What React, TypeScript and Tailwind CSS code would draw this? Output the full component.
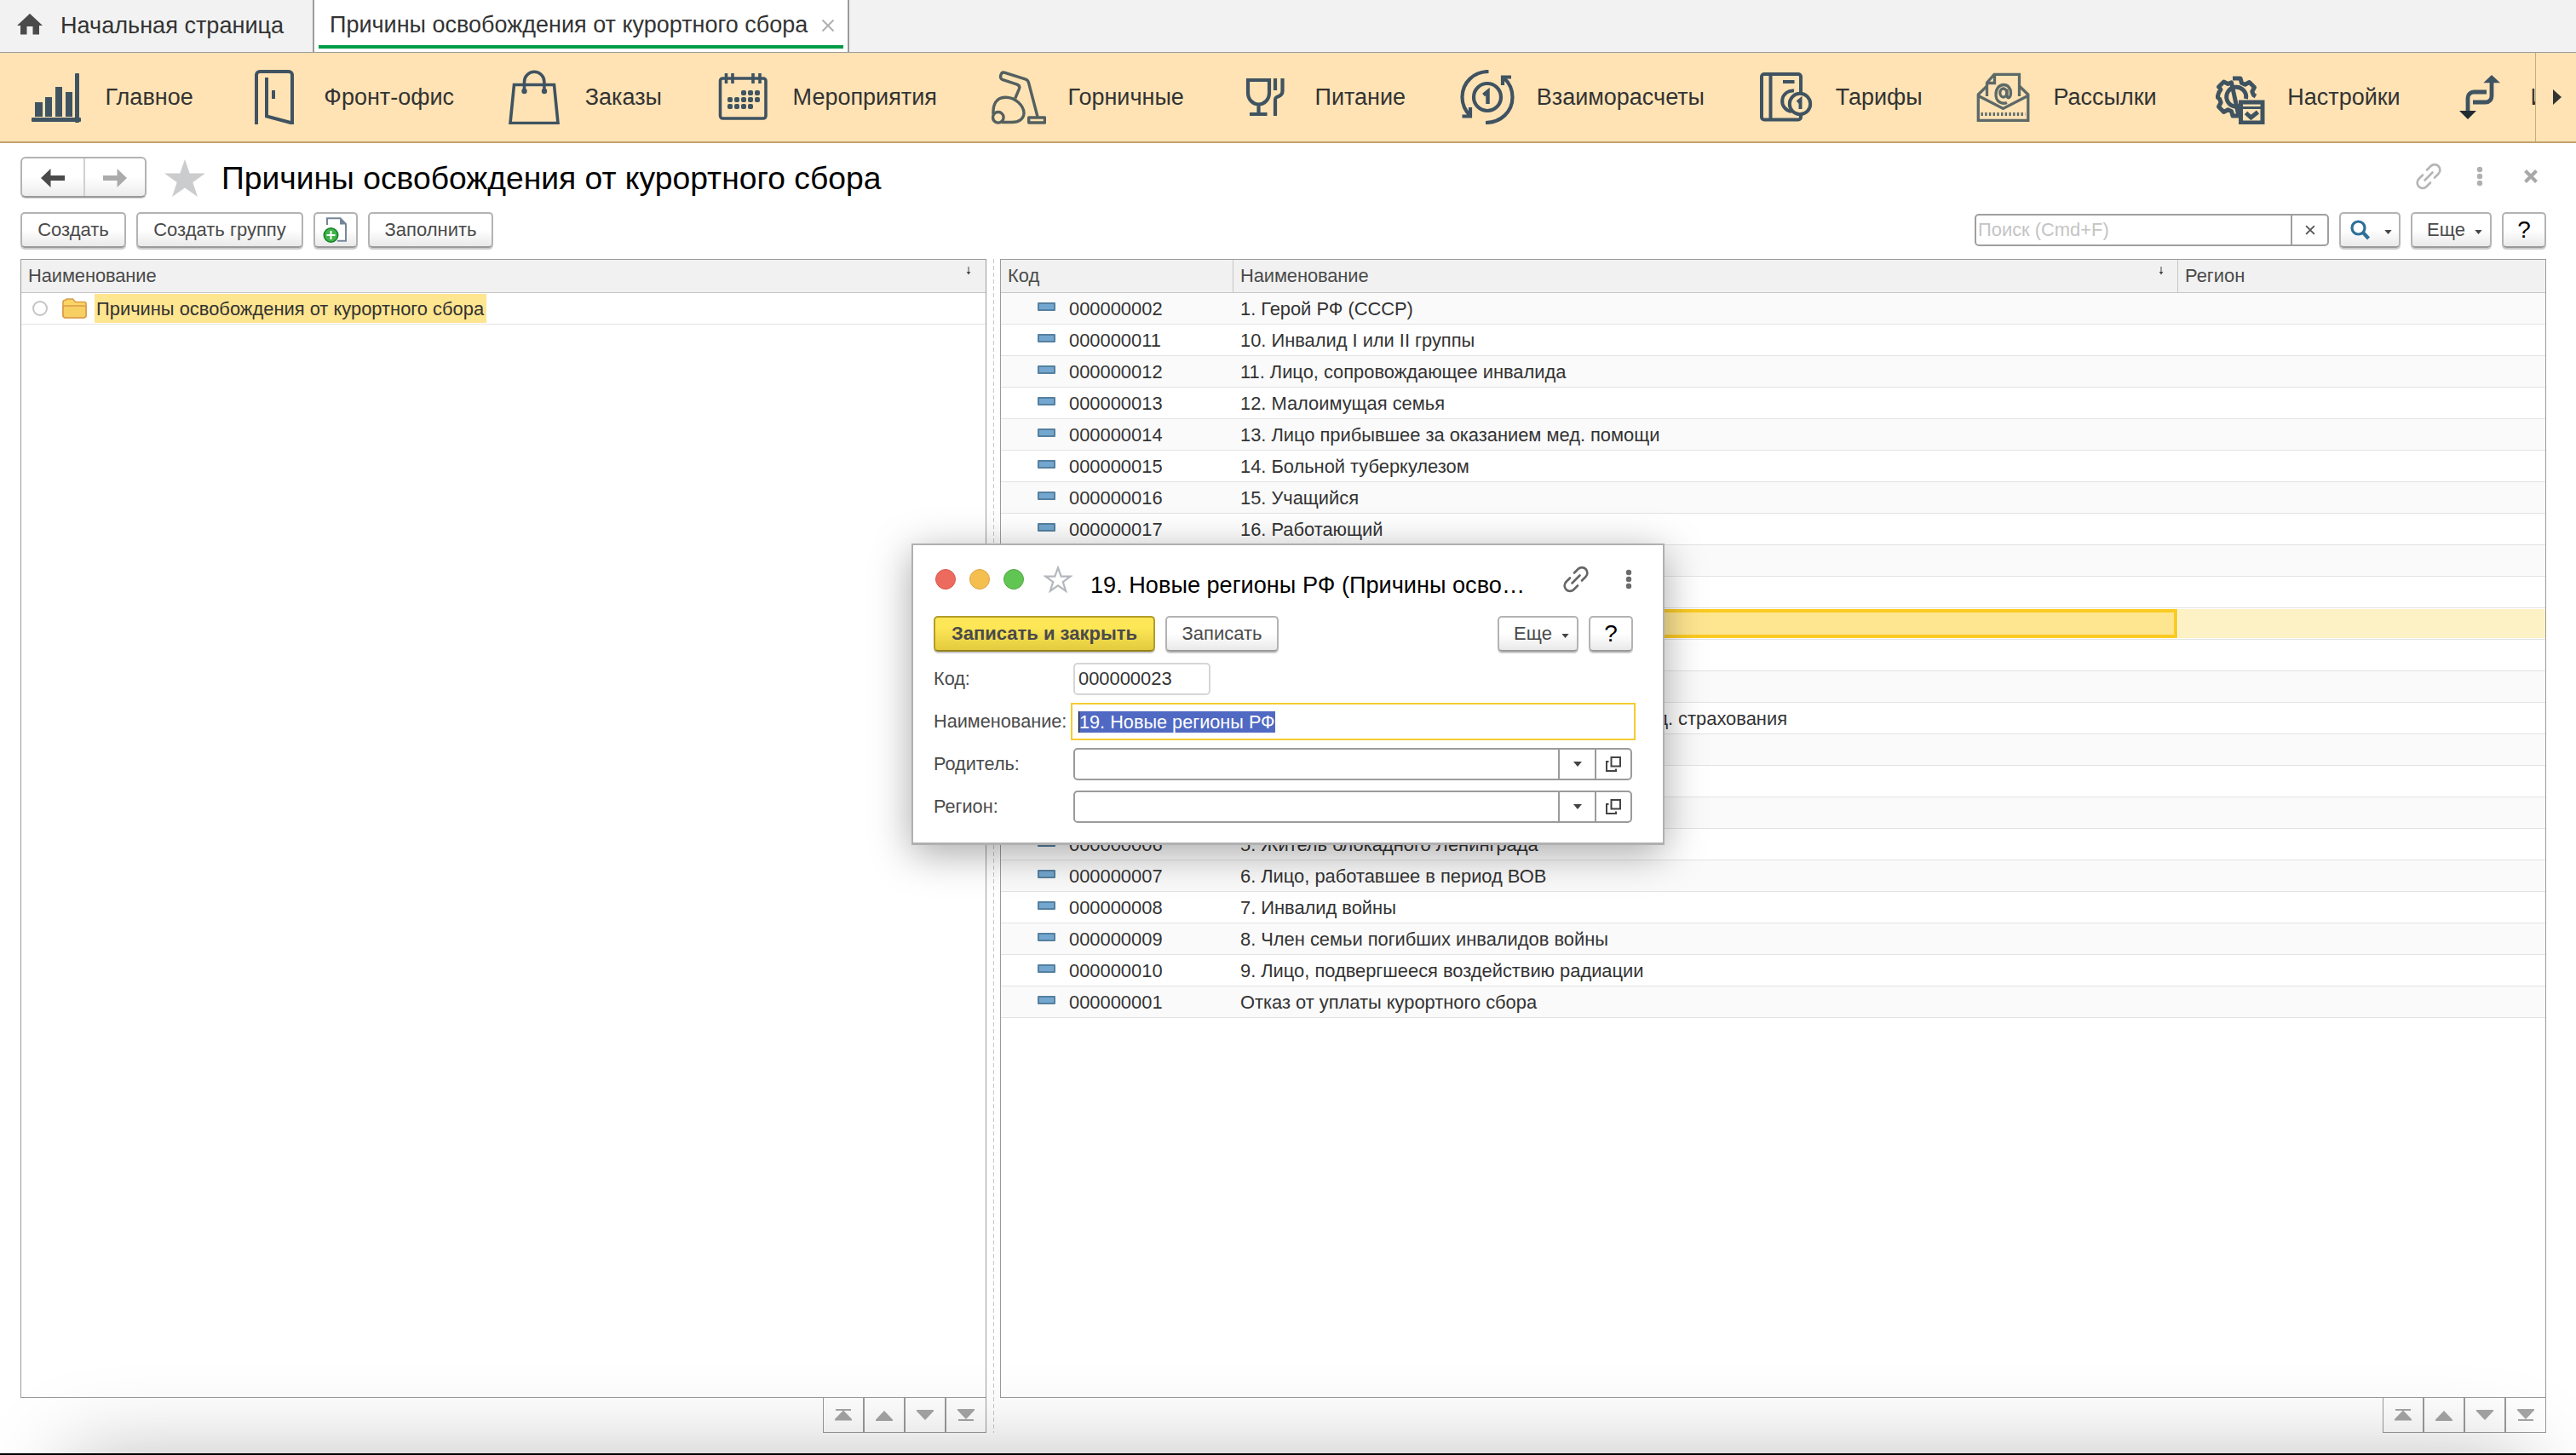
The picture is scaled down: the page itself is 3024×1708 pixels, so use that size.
import React from 'react';

type P = { children?: React.ReactNode; className?: string };

/* ---------- Section icons, drawn in a 64×64 box ---------- */

function Box({ children, w = 4 }: { children: React.ReactNode; w?: number }) {
  return (
    <svg viewBox="0 0 64 64" className="block h-16 w-16 shrink-0 overflow-hidden" fill="none" stroke="#3f5361" strokeWidth={w}>
      {children}
    </svg>
  );
}

const ChartIcon = () => (
  <Box>
    <g fill="#3f5361" stroke="none">
      <rect x="7" y="38" width="9" height="17" />
      <rect x="19" y="32" width="8" height="23" />
      <rect x="31" y="20" width="8" height="35" />
      <rect x="43" y="26" width="8" height="29" />
      <rect x="54" y="4" width="5" height="58" rx="1" />
      <rect x="3" y="56" width="58" height="5" rx="1" />
    </g>
  </Box>
);

const DoorIcon = () => (
  <Box>
    <path d="M11 64V6a4 4 0 0 1 4-4h34a4 4 0 0 1 4 4v56.500L23 54.500V9" />
    <path d="M31 24v10" />
  </Box>
);

const BagIcon = () => (
  <Box w={3.6}>
    <path d="M6.500 17.500h47l4.500 45H2z" />
    <path d="M18.500 25V14a11.700 11.700 0 0 1 23.400 0v11" />
    <g fill="#3f5361" stroke="none">
      <circle cx="18.500" cy="25" r="3.200" />
      <circle cx="42" cy="25" r="3.200" />
    </g>
  </Box>
);

const DOTS: [number, number][] = [
  [32, 27], [40, 27], [48, 27],
  [16, 35], [24, 35], [32, 35], [40, 35], [48, 35],
  [16, 43], [24, 43], [32, 43], [40, 43],
];

const CalendarIcon = () => (
  <Box w={3.6}>
    <rect x="4.500" y="10" width="53.500" height="47" rx="3" />
    <path d="M11.500 4v12M19 4v12M43 4v12M51 4v12" />
    <g fill="#3f5361" stroke="none">
      {DOTS.map(([x, y]) => (
        <rect key={`${x}-${y}`} x={x - 3} y={y - 3} width="6" height="6" rx="2" />
      ))}
    </g>
  </Box>
);

const VacuumIcon = () => (
  <Box w={3.4}>
    <g stroke="#54605f" strokeLinejoin="round">
      <path d="M54 55 43.500 15c-.6-2.400-1.500-3.300-4-4.100L15 3.100c-4-1-6.200 6-2.500 8.300L30 17.200c2.600 1 3.300 2.800 2.500 5L27.700 33.500" />
      <path d="M2 52C1.500 41 5 32.500 16 32.200c12-.2 21.500 9.800 22 18.300.2 7-6 11-14 11H12" />
      <circle cx="7.800" cy="55.800" r="6.300" />
      <rect x="43.700" y="56" width="18.800" height="6" />
    </g>
  </Box>
);

const FoodIcon = () => (
  <Box w={4.2}>
    <path d="M11 12h25v15c0 8-6 13.500-12.500 13.500S11 35 11 27zM23.500 40v12M13 52h20.500" />
    <path d="M43 10v14M51.500 10v15c0 4-2.500 5.500-5.500 6.500-2.500.8-3 1.500-3 4V54" />
  </Box>
);

const MoneyIcon = () => (
  <Box w={4.2}>
    <path d="M33.500 2C16 2 2.500 15 2.500 32c0 9 4 16.500 9.500 22M30 62c18 0 31.500-13 31.500-30 0-9-4-17-10-22.500" />
    <path d="M2.500 54.500H12V44M60 8.500H50V18" />
    <circle cx="32" cy="32" r="16" />
    <path d="M27.500 29.500 32.500 25.500V40" strokeWidth="4.500" />
  </Box>
);

const TariffIcon = () => (
  <Box w={4}>
    <path d="M49 27V8a3 3 0 0 0-3-3H6a3 3 0 0 0-3 3v47.500a3 3 0 0 0 3 3h40a3 3 0 0 0 3-3V53" />
    <path d="M13.500 5v53M28 14h13.500" />
    <path d="M41 24.500a12.300 12.300 0 1 0-3 24.500" />
    <circle cx="48" cy="40" r="12.200" />
    <path d="M45 38l3.500-3v11" strokeWidth="4" />
  </Box>
);

const MailIcon = () => (
  <Box w={3.3}>
    <g stroke="#5c6968">
      <path d="M12.500 31V15L21 5.300h29.500V31M21.500 5v10.500H12" />
      <path d="M12 19.500 2.300 29v30.300h58.500V29L51 19.500" />
      <path d="m2.500 30.500 29 15 29-15" />
      <path d="M5.500 52h52" strokeWidth="4" strokeDasharray="2.400 2.300" />
      <path d="M36 38.500c-5 2-13 0-13-9.500 0-7 4-11.500 9-11.500s8.500 4 8.500 9.500c0 6-4 7.500-4.500 3.500v-8" />
      <ellipse cx="31.800" cy="27" rx="4" ry="5" />
    </g>
  </Box>
);

const GearIcon = () => (
  <Box w={5}>
    <path
      d="M26 10h9l1.500 5.500 4 1.700 5-2.700 6 6-2.700 5 1.700 4 2.500 1.500M33 54h-7l-1.500-5.500-4-1.700-5 2.700-6-6.200 2.700-5-1.700-4.300L8.500 32.500v-2l1.500-4.500 2-3-2.500-3 6-6 5 2.500 4-1.700z"
      strokeLinejoin="round"
    />
    <path d="M37 41a11.500 11.500 0 1 1 4.500-7" />
    <rect x="35.500" y="38" width="25.500" height="24" fill="#ffe3b5" />
    <path d="M35 44.500h26" strokeWidth="3" />
    <path d="m41.500 50.500 6 5.500 8-6.500" strokeWidth="5" />
  </Box>
);

const SwapIcon = () => (
  <Box w={4.8}>
    <path d="M44 14v17a7 7 0 0 1-7 7H22M38 26H23a7 7 0 0 0-7 7v16" />
    <g stroke="none">
      <path d="M34.300 15.300 44 6l10 9.300z" fill="#3f5361" />
      <path d="M6 48h20L16 58z" fill="#1f2b33" />
    </g>
  </Box>
);

/* ---------- Small icons ---------- */

const LinkIcon = ({ className }: P) => (
  <svg viewBox="0 0 32 32" className={className} fill="none" stroke="currentColor" strokeWidth="2.600" strokeLinecap="round">
    <path d="m11.500 20.500 9-9" />
    <path d="m14 8.500 4.500-4.500a6.300 6.300 0 0 1 9 0 6.300 6.300 0 0 1 0 9L23 17.500" />
    <path d="M18 23.500 13.500 28a6.300 6.300 0 0 1-9 0 6.300 6.300 0 0 1 0-9L9 14.500" />
  </svg>
);

const Dots = ({ className }: P) => (
  <svg viewBox="0 0 8 24" className={className} fill="currentColor">
    <circle cx="4" cy="4" r="3.200" />
    <circle cx="4" cy="12" r="3.200" />
    <circle cx="4" cy="20" r="3.200" />
  </svg>
);

const Cross = ({ className, w }: P & { w: number }) => (
  <svg viewBox="0 0 16 16" className={className} stroke="currentColor" strokeWidth={w}>
    <path d="m1.500 1.500 13 13M14.500 1.500l-13 13" />
  </svg>
);

const Caret = ({ className }: P) => (
  <svg viewBox="0 0 10 6" className={className} fill="#444">
    <path d="M0 0h10L5 6z" />
  </svg>
);

const SortArrow = ({ className }: P) => (
  <svg viewBox="0 0 6 10" className={className} stroke="#444" fill="#444">
    <path d="M3 0v7" strokeWidth="1" />
    <path d="M.7 6h4.600L3 9.500z" stroke="none" />
  </svg>
);

/* ---------- Controls ---------- */

const PLAIN = 'border-[#b3b3b3] border-b-[#9a9a9a] from-white from-50% to-[#e9e9e9]';
const PRIMARY = 'border-[#b39d28] border-b-[#94811c] from-[#fde757] from-30% to-[#e3cb3d]';

function Btn({ children, className = '', tone = PLAIN }: P & { tone?: string }) {
  return (
    <div
      className={`flex h-[42px] shrink-0 items-center justify-center rounded-[5px] border-2 bg-linear-to-b text-[22px] leading-[36px] text-[#4a4a4a] shadow-[0_2px_0_#cccccc] ${tone} ${className}`}
    >
      {children}
    </div>
  );
}

const More = () => (
  <Btn className="w-[95px] gap-[11px] pl-2">
    <span>Еще</span>
    <Caret className="mt-1 h-[5px] w-[9px]" />
  </Btn>
);

const Help = () => (
  <Btn className="w-[52px]">
    <span className="text-[28px] leading-none text-black">?</span>
  </Btn>
);

function Pager() {
  const cell = 'flex h-[41px] items-center justify-center border-b border-[#9b9b9b]';
  return (
    <div className="flex w-48 self-end text-[#a6a6a6]">
      <div className={`${cell} w-[49px] border-r-2 border-l`}>
        <svg viewBox="0 0 20 14" className="h-[14px] w-5" fill="currentColor">
          <path d="M1 0h18v2H1zM10 1.500 20 12v1.500H0V12z" />
        </svg>
      </div>
      <div className={`${cell} w-12 border-r-2`}>
        <svg viewBox="0 0 20 12" className="mt-0.5 h-3 w-5" fill="currentColor">
          <path d="M10 0 20 10.500V12H0v-1.500z" />
        </svg>
      </div>
      <div className={`${cell} w-12 border-r-2`}>
        <svg viewBox="0 0 20 12" className="h-3 w-5" fill="currentColor">
          <path d="M10 12 20 1.500V0H0v1.500z" />
        </svg>
      </div>
      <div className={`${cell} w-[47px] border-r`}>
        <svg viewBox="0 0 20 14" className="h-[14px] w-5" fill="currentColor">
          <path d="M1 12h18v2H1zM10 12 20 1.500V0H0v1.500z" />
        </svg>
      </div>
    </div>
  );
}

/* ---------- Data ---------- */

const NAV: [string, () => React.ReactElement][] = [
  ['Главное', ChartIcon],
  ['Фронт-офис', DoorIcon],
  ['Заказы', BagIcon],
  ['Мероприятия', CalendarIcon],
  ['Горничные', VacuumIcon],
  ['Питание', FoodIcon],
  ['Взаиморасчеты', MoneyIcon],
  ['Тарифы', TariffIcon],
  ['Рассылки', MailIcon],
  ['Настройки', GearIcon],
  ['И', SwapIcon],
];

type Row = { code?: string; name?: string; tail?: boolean; selected?: boolean };

const ROWS: Row[] = [
  { code: '000000002', name: '1. Герой РФ (СССР)' },
  { code: '000000011', name: '10. Инвалид I или II группы' },
  { code: '000000012', name: '11. Лицо, сопровождающее инвалида' },
  { code: '000000013', name: '12. Малоимущая семья' },
  { code: '000000014', name: '13. Лицо прибывшее за оказанием мед. помощи' },
  { code: '000000015', name: '14. Больной туберкулезом' },
  { code: '000000016', name: '15. Учащийся' },
  { code: '000000017', name: '16. Работающий' },
  {},
  {},
  { selected: true },
  {},
  {},
  { name: 'мед. страхования', tail: true },
  {},
  {},
  {},
  { code: '000000006', name: '5. Житель блокадного Ленинграда' },
  { code: '000000007', name: '6. Лицо, работавшее в период ВОВ' },
  { code: '000000008', name: '7. Инвалид войны' },
  { code: '000000009', name: '8. Член семьи погибших инвалидов войны' },
  { code: '000000010', name: '9. Лицо, подвергшееся воздействию радиации' },
  { code: '000000001', name: 'Отказ от уплаты курортного сбора' },
];

function TableRow({ row, odd }: { row: Row; odd: boolean }) {
  return (
    <div className={`flex h-[37px] border-b border-[#e3e3e3] leading-[38px] ${odd || row.selected ? 'bg-white' : 'bg-[#fafafa]'}`}>
      <div className="flex w-[272px] shrink-0 pl-[43px]">
        {row.code && (
          <>
            <div className="mt-[11px] mr-4 h-[10px] w-[21px] rounded-[1px] border-2 border-[#5580a0] bg-[#74a7cf]" />
            <span>{row.code}</span>
          </>
        )}
      </div>
      {row.selected ? (
        <>
          <div className="mt-px h-[34px] w-[1109px] shrink-0 border-4 border-[#fbcb22] bg-[#fee590]" />
          <div className="mt-px ml-px h-[34px] grow bg-[#fdf2c6]" />
        </>
      ) : (
        <div className={row.tail ? 'w-[651px] text-right' : 'pl-[9px] tracking-[-0.02px]'}>{row.name}</div>
      )}
    </div>
  );
}

/* ---------- Dialog ---------- */

const Label = ({ children }: P) => <div className="w-[164px] shrink-0 text-[21.7px] text-[#4a4a4a]">{children}</div>;

function RefField({ label }: { label: string }) {
  return (
    <div className="flex h-[50px] items-center">
      <Label>{label}</Label>
      <div className="flex h-[38px] w-[656px] rounded-[5px] border-2 border-[#9b9b9b] bg-white">
        <div className="grow" />
        <div className="flex w-[43px] items-center justify-center border-l-2 border-[#9b9b9b]">
          <Caret className="h-1.5 w-[10px]" />
        </div>
        <div className="flex w-[42px] items-center justify-center border-l-2 border-[#9b9b9b]">
          <svg viewBox="0 0 20 20" className="h-5 w-5" fill="none" stroke="#444" strokeWidth="2">
            <path d="M7.500 2h10.500v10.500H7.500zM4.500 7H2v11h11v-2.500" />
          </svg>
        </div>
      </div>
    </div>
  );
}

function Dialog() {
  return (
    <div className="absolute top-[638px] left-[1070px] h-[354px] w-[884px] border-2 border-[#b0b0b0] border-b-[3px] bg-white px-6 text-[21.9px] leading-none shadow-[0_10px_44px_rgba(0,0,0,0.34)]">
      <div className="flex h-[83px] items-center pb-1 pl-0.5">
        <div className="flex gap-4">
          <div className="h-6 w-6 rounded-full border border-[#d9574c] bg-[#ed6a5f]" />
          <div className="h-6 w-6 rounded-full border border-[#dfa341] bg-[#f5bf4f]" />
          <div className="h-6 w-6 rounded-full border border-[#51a73e] bg-[#61c554]" />
        </div>
        <svg viewBox="0 0 34 32" className="ml-[23px] h-8 w-[34px]" fill="none" stroke="#b4b7bd" strokeWidth="2.200">
          <path d="m17 2.500 3.700 10.200h10.800l-8.700 6.500 3.300 10.500-9.100-6.400-9.100 6.400 3.300-10.500-8.700-6.500h10.800z" />
        </svg>
        <div className="mt-[15px] ml-[21px] w-[554px] text-[27.15px] text-black">19. Новые регионы РФ (Причины осво…</div>
        <LinkIcon className="h-8 w-8 text-[#666]" />
        <Dots className="ml-[42px] h-6 w-2 text-[#6b6b6b]" />
      </div>
      <div className="flex gap-3">
        <Btn tone={PRIMARY} className="w-[260px] font-bold">Записать и закрыть</Btn>
        <Btn className="w-[133px]">Записать</Btn>
        <div className="grow" />
        <More />
        <div className="mr-[11px]">
          <Help />
        </div>
      </div>
      <div className="mt-[7px]">
        <div className="flex h-[50px] items-center">
          <Label>Код:</Label>
          <div className="flex h-[38px] w-[161px] items-center rounded-[5px] border-2 border-[#d6d6d6] pl-1 text-[#333]">000000023</div>
        </div>
        <div className="flex h-[50px] items-center">
          <Label>Наименование:</Label>
          <div className="-ml-[3px] flex h-[44px] w-[663px] shrink-0 items-center border-2 border-[#f4cc30] pl-[7px]">
            <span className="border-l border-black bg-[#5069c3] text-[21.7px] leading-[25px] text-white">19. Новые регионы РФ</span>
          </div>
        </div>
        <RefField label="Родитель:" />
        <RefField label="Регион:" />
      </div>
    </div>
  );
}

/* ---------- Page ---------- */

export default function App() {
  return (
    <div className="relative flex h-[1708px] w-[3024px] flex-col overflow-hidden bg-white font-['Liberation_Sans',Arial,sans-serif] text-[21.9px] text-[#333]">
      {/* Tabs */}
      <div className="flex h-[62px] shrink-0 border-b border-[#9b9b9b] bg-[#f2f2f2] text-[27.1px] leading-[58px]">
        <div className="flex w-[367px] items-center">
          <svg viewBox="0 0 30 26" className="mb-1 ml-5 h-[26px] w-[30px]" fill="#4a4a4a">
            <path d="M15 0 30 14h-4v10.500h-7.500V15h-7v9.500H4V14H0z" />
          </svg>
          <span className="mb-0.5 ml-[21px]">Начальная страница</span>
        </div>
        <div className="flex h-[61px] w-[630px] flex-col border-x-2 border-[#9b9b9b] bg-white px-[5px]">
          <div className="flex h-[53px] shrink-0 items-center">
            <span className="ml-[13px] pt-[5px] text-[27px]">Причины освобождения от курортного сбора</span>
            <Cross w={2} className="mt-1.5 ml-4 h-4 w-4 text-[#b0b0b0]" />
          </div>
          <div className="h-1 bg-[#009c48]" />
        </div>
      </div>

      {/* Sections */}
      <div className="flex h-[106px] shrink-0 border-b-2 border-[#c1a36f] bg-[#ffe3b5]">
        <div className="flex w-[2976px] items-center gap-[63.7px] overflow-hidden pl-[33.5px]">
          {NAV.map(([label, Icon]) => (
            <div key={label} className="flex shrink-0 items-center gap-[26px] last:gap-[25px]">
              <Icon />
              <span className="text-[27px] leading-[60px] whitespace-nowrap">{label}</span>
            </div>
          ))}
        </div>
        <div className="flex grow items-center border-l border-[#c9ad7c] pl-5">
          <svg viewBox="0 0 10 18" className="h-[18px] w-[10px]" fill="#333">
            <path d="M0 0v18l10-9z" />
          </svg>
        </div>
      </div>

      {/* Title */}
      <div className="mt-4 flex h-12 shrink-0 items-center pl-6">
        <div className="flex h-12 w-[148px] rounded-[6px] border-2 border-[#b3b3b3] border-b-[#9a9a9a] bg-linear-to-b from-white from-50% to-[#ececec] shadow-[0_1px_0_#cccccc]">
          <div className="flex w-[74px] items-center justify-center border-r-2 border-[#d0d0d0]">
            <svg viewBox="0 0 28 22" className="mt-px h-[22px] w-7" fill="#4a4a4a">
              <path d="M0 11 11.500 0v8H28v6H11.500v8z" />
            </svg>
          </div>
          <div className="flex grow items-center justify-center">
            <svg viewBox="0 0 28 22" className="mt-px h-[22px] w-7" fill="#ababab">
              <path d="M28 11 16.500 0v8H0v6h16.500v8z" />
            </svg>
          </div>
        </div>
        <svg viewBox="0 0 48 44" className="mt-0.5 ml-[21px] h-11 w-12" fill="#cbcccd">
          <path d="m24 0 5.700 16.500H48L33.300 27l5.700 17-15-10.500L9 44l5.700-17L0 16.500h18.300z" />
        </svg>
        <h1 className="mt-0.5 ml-[19px] text-[37.25px] leading-[48px] text-black">Причины освобождения от курортного сбора</h1>
        <div className="grow" />
        <LinkIcon className="mr-px mb-0.5 h-8 w-8 text-[#b5b5b5]" />
        <Dots className="mb-0.5 ml-[39px] h-6 w-2 text-[#b0b0b0]" />
        <Cross w={4} className="mr-[45px] mb-0.5 ml-[48px] h-4 w-4 text-[#a8a8a8]" />
      </div>

      {/* Commands */}
      <div className="mt-[17px] flex h-[42px] shrink-0 gap-3 pr-[35px] pl-6">
        <Btn className="w-[124px]">Создать</Btn>
        <Btn className="w-[196px]">Создать группу</Btn>
        <Btn className="w-[52px]">
          <svg viewBox="0 0 28 30" className="mr-0.5 h-[30px] w-7">
            <path d="M5 9V1.200h15.500L27 8v19.800H17" fill="#fff" stroke="#75869a" strokeWidth="2" />
            <path d="M20 1v7.500h7z" fill="#75869a" />
            <circle cx="9.500" cy="21" r="8.200" fill="#3fb24a" stroke="#15812a" strokeWidth="1.600" />
            <path d="M9.500 16v10M4.500 21h10" stroke="#fff" strokeWidth="2" />
          </svg>
        </Btn>
        <Btn className="w-[147px]">Заполнить</Btn>
        <div className="grow" />
        <div className="mt-0.5 flex h-[38px] w-[416px] rounded-[5px] border-2 border-[#9f9f9f] bg-white">
          <div className="grow pl-0.5 leading-[33px] text-[#c4c4c4]">Поиск (Cmd+F)</div>
          <div className="flex w-[43px] items-center justify-center border-l-2 border-[#9f9f9f]">
            <Cross w={2.4} className="h-3 w-3 text-[#555]" />
          </div>
        </div>
        <Btn className="w-[72px] gap-4 pl-0.5">
          <svg viewBox="0 0 24 24" className="h-6 w-6" fill="none" stroke="#2f6f97">
            <circle cx="9.500" cy="9.500" r="7.500" strokeWidth="3.200" />
            <path d="m15 15 6.500 7" strokeWidth="4.200" />
          </svg>
          <Caret className="mt-1 h-[5px] w-[9px]" />
        </Btn>
        <More />
        <Help />
      </div>

      {/* Tables */}
      <div className="mt-[13px] flex h-[1378px] shrink-0 pl-6">
        <div className="flex w-[1134px] flex-col">
          <div className="h-[1337px] border border-[#9b9b9b]">
            <div className="flex h-[39px] justify-between border-b border-[#c6c6c6] bg-[#f1f1f1] pr-[17px] pl-2 leading-[38px] text-[#4a4a4a]">
              <span className="tracking-[-0.1px]">Наименование</span>
              <SortArrow className="mt-2 h-[10px] w-1.5" />
            </div>
            <div className="flex h-[37px] border-b border-[#e3e3e3] pl-[13px]">
              <div className="mt-[9px] h-[18px] w-[18px] rounded-full border-2 border-[#c4c4c4] bg-white" />
              <svg viewBox="0 0 29 24" className="mt-1.5 ml-[17px] h-6 w-[29px]">
                <path d="M1 4.500C1 3 2 2.500 3 2.500L5.500 1h7l3 3.500H26c1.300 0 2 .7 2 2V20c0 2-1 3-3 3H4c-2 0-3-1-3-3z" fill="#fbd564" stroke="#d99c4a" strokeWidth="1.600" />
                <path d="M1 11c0-1.500 1-2 2-2h23c1.300 0 2 .7 2 2v9c0 2-1 3-3 3H4c-2 0-3-1-3-3z" fill="#f7cf63" stroke="#d99c4a" strokeWidth="1.600" />
              </svg>
              <span className="mt-px ml-[9px] h-[34px] bg-[#fee590] pr-[3px] pl-0.5 leading-[36px]">Причины освобождения от курортного сбора</span>
            </div>
          </div>
          <Pager />
        </div>

        <div className="mr-[7px] ml-2 w-px bg-[repeating-linear-gradient(to_bottom,#c8c8c8_0_5px,transparent_5px_8px)]" />

        <div className="flex w-[1815px] flex-col">
          <div className="h-[1337px] border border-[#9b9b9b]">
            <div className="flex h-[39px] border-b border-[#c6c6c6] bg-[#f1f1f1] leading-[38px] text-[#4a4a4a]">
              <div className="w-[273px] border-r border-[#c6c6c6] pl-2">Код</div>
              <div className="flex w-[1109px] justify-between border-r border-[#c6c6c6] pr-4 pl-2">
                <span className="tracking-[-0.1px]">Наименование</span>
                <SortArrow className="mt-2 h-[10px] w-1.5" />
              </div>
              <div className="pl-2">Регион</div>
            </div>
            {ROWS.map((row, i) => (
              <TableRow key={i} row={row} odd={i % 2 === 1} />
            ))}
          </div>
          <Pager />
        </div>
      </div>

      <Dialog />

      {/* Shade rising from the lower edge of the window */}
      <div className="pointer-events-none absolute top-[1708px] right-[60px] left-[80px] h-[200px] shadow-[0_0_100px_rgba(0,0,0,0.26)]" />
      <div className="absolute bottom-0 left-0 h-0.5 w-full bg-black" />
    </div>
  );
}
